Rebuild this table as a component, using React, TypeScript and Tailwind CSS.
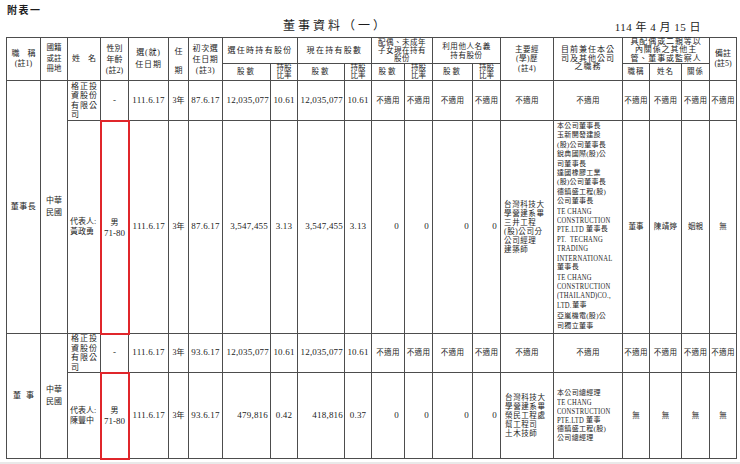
import React from 'react';

const td = 'border border-[#4d4d4d] p-0 text-center align-middle';
const red = 'border-2 border-[#e0262b]';
const na = 'text-[7.5px] tracking-[0.4px]';
const num = 'text-[9px] tracking-[0.2px]';

function Stack({ lines, className = '' }: { lines: React.ReactNode[]; className?: string }) {
    return (
        <div className={className}>
            {lines.map((l, i) => (
                <div key={i} className="whitespace-nowrap">{l}</div>
            ))}
        </div>
    );
}

// condensed latin line, like the narrow serif in the scan
const LatLine = ({ children }: { children: React.ReactNode }) => (
    <div className="origin-left scale-x-[0.73] text-[9px] whitespace-nowrap">{children}</div>
);

// latin inside a line that also has chinese
const Lat = ({ children, mr }: { children: React.ReactNode; mr: string }) => (
    <span className={`inline-block align-top origin-left scale-x-[0.73] text-[9px] ${mr}`}>{children}</span>
);

const NotApplicable = ({ n }: { n: number }) => (
    <>
        {Array.from({ length: n }).map((_, i) => (
            <td key={i} className={`${td} ${na}`}>不適用</td>
        ))}
    </>
);

const Corp = () => (
    <td className={`${td} text-left pl-[3px]`}>
        <Stack lines={['格正投', '資股份', '有限公', '司']} className="text-[8px] leading-[9.5px] tracking-[1px]" />
    </td>
);

const Ratio = () => (
    <td className={td}>
        <Stack lines={['持股', '比率']} className="text-[7.5px] leading-[8px]" />
    </td>
);

export default function App() {
    return (
        <div className="w-[740px] h-[464px] bg-[#e9e9e9] font-['Liberation_Serif','Noto_Sans_CJK_TC',serif] text-[#1c1c1c]">
            <div className="h-[462px] bg-white overflow-hidden">
                <div className="pt-[5px] pl-[7px] text-[10px] leading-[12px] font-bold tracking-[1.5px]">附表一</div>
                <div className="flex items-end h-[20px] pb-[4px]">
                    <div className="ml-[283px] text-[12px] leading-[14px] tracking-[3px]">董事資料（一）</div>
                    <div className="ml-auto mr-[39px] text-[11px] leading-[12px] tracking-[0.5px]">114 年 4 月 15 日</div>
                </div>

                <table className="ml-[6px] w-[730px] table-fixed border-collapse">
                    <colgroup>
                        <col className="w-[34px]" />
                        <col className="w-[27px]" />
                        <col className="w-[33px]" />
                        <col className="w-[28px]" />
                        <col className="w-[40px]" />
                        <col className="w-[20px]" />
                        <col className="w-[34px]" />
                        <col className="w-[48px]" />
                        <col className="w-[27px]" />
                        <col className="w-[47px]" />
                        <col className="w-[27px]" />
                        <col className="w-[33px]" />
                        <col className="w-[28px]" />
                        <col className="w-[40px]" />
                        <col className="w-[28px]" />
                        <col className="w-[53px]" />
                        <col className="w-[69px]" />
                        <col className="w-[27px]" />
                        <col className="w-[32px]" />
                        <col className="w-[28px]" />
                        <col className="w-[27px]" />
                    </colgroup>
                    <thead>
                        <tr className="h-[26px]">
                            <td rowSpan={2} className={td}>
                                <Stack lines={['職　稱', '(註1)']} className="text-[8px] leading-[10px]" />
                            </td>
                            <td rowSpan={2} className={td}>
                                <Stack lines={['國籍', '或註', '冊地']} className="text-[7.5px] leading-[10.5px]" />
                            </td>
                            <td rowSpan={2} className={`${td} text-[8px]`}>姓　名</td>
                            <td rowSpan={2} className={td}>
                                <Stack lines={['性別', '年齡', '(註2)']} className="text-[8px] leading-[11px]" />
                            </td>
                            <td rowSpan={2} className={td}>
                                <Stack lines={['選(就)', '任日期']} className="text-[8px] leading-[12px] tracking-[0.8px]" />
                            </td>
                            <td rowSpan={2} className={td}>
                                <Stack lines={['任', '期']} className="text-[8px] leading-[19px] pt-[4px]" />
                            </td>
                            <td rowSpan={2} className={td}>
                                <Stack lines={['初次選', '任日期', '(註3)']} className="text-[8px] leading-[11px] tracking-[0.6px]" />
                            </td>
                            <td colSpan={2} className={`${td} text-[8px] tracking-[1.3px]`}>選任時持有股份</td>
                            <td colSpan={2} className={`${td} text-[8px] tracking-[1.3px]`}>現在持有股數</td>
                            <td colSpan={2} className={td}>
                                <Stack lines={['配偶、未成年', '子女現在持有', '股份']} className="text-[7.5px] leading-[8px] tracking-[0.5px]" />
                            </td>
                            <td colSpan={2} className={td}>
                                <Stack lines={['利用他人名義', '持有股份']} className="text-[7.5px] leading-[9px] tracking-[0.6px]" />
                            </td>
                            <td rowSpan={2} className={td}>
                                <Stack lines={['主要經', '(學)歷', '(註4)']} className="text-[7.5px] leading-[9.5px] tracking-[0.5px]" />
                            </td>
                            <td rowSpan={2} className={`${td} align-top pt-[8px]`}>
                                <Stack lines={['目前兼任本公', '司及其他公司', '之職務']} className="text-[8px] leading-[8.5px] tracking-[1px]" />
                            </td>
                            <td colSpan={3} className={td}>
                                <Stack lines={['具配偶或二親等以', '內關係之其他主', '管、董事或監察人']} className="text-[8px] leading-[8.3px] tracking-[0.9px]" />
                            </td>
                            <td rowSpan={2} className={td}>
                                <Stack lines={['備註', '(註5)']} className="text-[8px] leading-[10px]" />
                            </td>
                        </tr>
                        <tr className="h-[17px]">
                            <td className={`${td} text-[7.5px] tracking-[2px]`}>股數</td>
                            <Ratio />
                            <td className={`${td} text-[7.5px] tracking-[2px]`}>股數</td>
                            <Ratio />
                            <td className={`${td} text-[7.5px] tracking-[2px]`}>股數</td>
                            <Ratio />
                            <td className={`${td} text-[7.5px] tracking-[2px]`}>股數</td>
                            <Ratio />
                            <td className={`${td} text-[7.5px] tracking-[1px]`}>職稱</td>
                            <td className={`${td} text-[7.5px] tracking-[1px]`}>姓名</td>
                            <td className={`${td} text-[7.5px] tracking-[1px]`}>關係</td>
                        </tr>
                    </thead>
                    <tbody>
                        {/* 董事長 - corporate */}
                        <tr className="h-[40px]">
                            <td rowSpan={2} className={`${td} text-[8px] tracking-[0.5px]`}>董事長</td>
                            <td rowSpan={2} className={td}>
                                <Stack lines={['中華', '民國']} className="text-[8px] leading-[12px]" />
                            </td>
                            <Corp />
                            <td className={`${td} ${num}`}>-</td>
                            <td className={`${td} ${num}`}>111.6.17</td>
                            <td className={`${td} text-[8px]`}>3年</td>
                            <td className={`${td} ${num}`}>87.6.17</td>
                            <td className={`${td} ${num} text-right pr-[1px]`}>12,035,077</td>
                            <td className={`${td} ${num}`}>10.61</td>
                            <td className={`${td} ${num} text-right pr-[1px]`}>12,035,077</td>
                            <td className={`${td} ${num}`}>10.61</td>
                            <NotApplicable n={10} />
                        </tr>
                        {/* 代表人 黃政勇 */}
                        <tr className="h-[213px]">
                            <td className={`${td} text-left pl-[2px]`}>
                                <Stack lines={['代表人:', '黃政勇']} className="text-[8px] leading-[10px]" />
                            </td>
                            <td className={`${td} ${red}`}>
                                <div className="text-[8px] leading-[11px]">男</div>
                                <div className="text-[9px] leading-[10px]">71-80</div>
                            </td>
                            <td className={`${td} ${num}`}>111.6.17</td>
                            <td className={`${td} text-[8px]`}>3年</td>
                            <td className={`${td} ${num}`}>87.6.17</td>
                            <td className={`${td} ${num} text-right pr-[2px]`}>3,547,455</td>
                            <td className={`${td} ${num}`}>3.13</td>
                            <td className={`${td} ${num} text-right pr-[1px]`}>3,547,455</td>
                            <td className={`${td} ${num}`}>3.13</td>
                            <td className={`${td} ${num} text-right pr-[5px]`}>0</td>
                            <td className={`${td} ${num} text-right pr-[3px]`}>0</td>
                            <td className={`${td} ${num} text-right pr-[3px]`}>0</td>
                            <td className={`${td} ${num} text-right pr-[3px]`}>0</td>
                            <td className={`${td} text-left pl-[3px]`}>
                                <Stack
                                    lines={['台灣科技大', '學營建系畢', '三井工程', '(股)公司分', '公司經理', '建築師']}
                                    className="text-[7.5px] leading-[9px] tracking-[0.6px]"
                                />
                            </td>
                            <td className={`${td} text-left pl-[3px] align-top pt-[1px]`}>
                                <div className="text-[7px] leading-[9.4px] tracking-[0.3px] whitespace-nowrap">
                                    <div>本公司董事長</div>
                                    <div>玉新開發建設</div>
                                    <div>(股)公司董事長</div>
                                    <div>銳典國際(股)公</div>
                                    <div>司董事長</div>
                                    <div>達國橡膠工業</div>
                                    <div>(股)公司董事長</div>
                                    <div>德鎮盛工程(股)</div>
                                    <div>公司董事長</div>
                                    <LatLine>TE CHANG</LatLine>
                                    <LatLine>CONSTRUCTION</LatLine>
                                    <div><Lat mr="mr-[-10px]">PTE.LTD</Lat> 董事長</div>
                                    <LatLine>PT.&nbsp; TECHANG</LatLine>
                                    <LatLine>TRADING</LatLine>
                                    <LatLine>INTERNATIONAL</LatLine>
                                    <div>董事長</div>
                                    <LatLine>TE CHANG</LatLine>
                                    <LatLine>CONSTRUCTION</LatLine>
                                    <LatLine>(THAILAND)CO.,</LatLine>
                                    <div><Lat mr="mr-[-5px]">LTD.</Lat>董事</div>
                                    <div className="mt-[2px]">亞嵐機電(股)公</div>
                                    <div>司獨立董事</div>
                                </div>
                            </td>
                            <td className={`${td} text-[7.5px]`}>董事</td>
                            <td className={`${td} text-[7.5px] tracking-[0.3px]`}>陳靖婷</td>
                            <td className={`${td} text-[7.5px]`}>姻親</td>
                            <td className={`${td} text-[7.5px]`}>無</td>
                        </tr>
                        {/* 董事 - corporate */}
                        <tr className="h-[39px]">
                            <td rowSpan={2} className={td}>
                                <div className="flex justify-between px-[6px] text-[8px]">
                                    <span>董</span>
                                    <span>事</span>
                                </div>
                            </td>
                            <td rowSpan={2} className={td}>
                                <Stack lines={['中華', '民國']} className="text-[8px] leading-[12px]" />
                            </td>
                            <Corp />
                            <td className={`${td} ${num}`}>-</td>
                            <td className={`${td} ${num}`}>111.6.17</td>
                            <td className={`${td} text-[8px]`}>3年</td>
                            <td className={`${td} ${num}`}>93.6.17</td>
                            <td className={`${td} ${num} text-right pr-[1px]`}>12,035,077</td>
                            <td className={`${td} ${num}`}>10.61</td>
                            <td className={`${td} ${num} text-right pr-[1px]`}>12,035,077</td>
                            <td className={`${td} ${num}`}>10.61</td>
                            <NotApplicable n={10} />
                        </tr>
                        {/* 代表人 陳豐中 */}
                        <tr className="h-[86px]">
                            <td className={`${td} text-left pl-[2px]`}>
                                <Stack lines={['代表人:', '陳豐中']} className="text-[8px] leading-[10px]" />
                            </td>
                            <td className={`${td} ${red}`}>
                                <div className="text-[8px] leading-[11px]">男</div>
                                <div className="text-[9px] leading-[10px]">71-80</div>
                            </td>
                            <td className={`${td} ${num}`}>111.6.17</td>
                            <td className={`${td} text-[8px]`}>3年</td>
                            <td className={`${td} ${num}`}>93.6.17</td>
                            <td className={`${td} ${num} text-right pr-[2px]`}>479,816</td>
                            <td className={`${td} ${num}`}>0.42</td>
                            <td className={`${td} ${num} text-right pr-[1px]`}>418,816</td>
                            <td className={`${td} ${num}`}>0.37</td>
                            <td className={`${td} ${num} text-right pr-[5px]`}>0</td>
                            <td className={`${td} ${num} text-right pr-[3px]`}>0</td>
                            <td className={`${td} ${num} text-right pr-[3px]`}>0</td>
                            <td className={`${td} ${num} text-right pr-[3px]`}>0</td>
                            <td className={`${td} text-left pl-[4px]`}>
                                <Stack
                                    lines={['台灣科技大', '學營建系畢', '榮民工程處', '幫工程司', '土木技師']}
                                    className="text-[7.5px] leading-[9px] tracking-[0.6px]"
                                />
                            </td>
                            <td className={`${td} text-left pl-[3px]`}>
                                <div className="text-[7px] leading-[9px] tracking-[0.3px] whitespace-nowrap">
                                    <div>本公司總經理</div>
                                    <LatLine>TE CHANG</LatLine>
                                    <LatLine>CONSTRUCTION</LatLine>
                                    <div><Lat mr="mr-[-10px]">PTE.LTD</Lat> 董事</div>
                                    <div>德鎮盛工程(股)</div>
                                    <div>公司總經理</div>
                                </div>
                            </td>
                            <td className={`${td} text-[7.5px]`}>無</td>
                            <td className={`${td} text-[7.5px]`}>無</td>
                            <td className={`${td} text-[7.5px]`}>無</td>
                            <td className={`${td} text-[7.5px]`}>無</td>
                        </tr>
                    </tbody>
                </table>
            </div>
        </div>
    );
}
